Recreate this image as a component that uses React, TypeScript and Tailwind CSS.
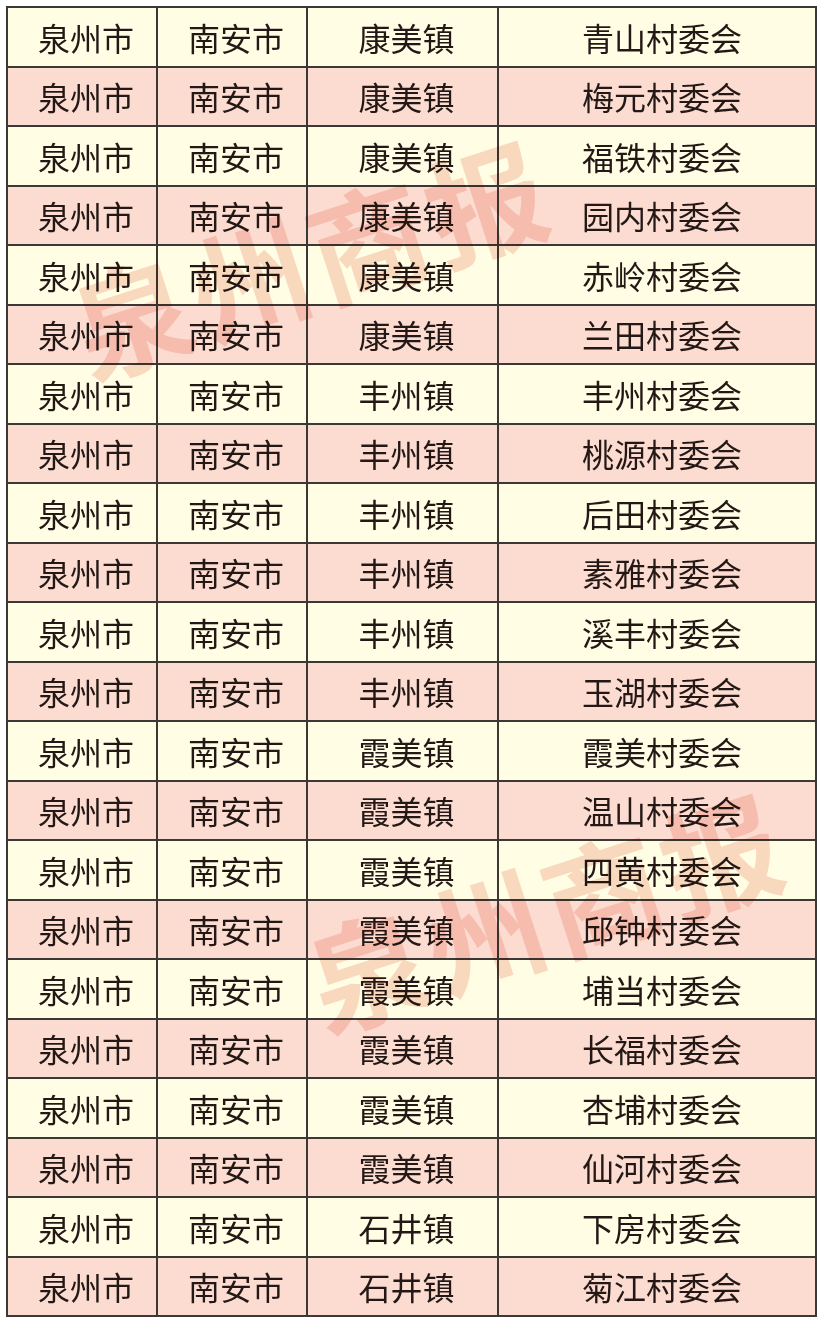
import React from "react";

const rows: [string, string][] = [
  ["康美镇", "青山村委会"],
  ["康美镇", "梅元村委会"],
  ["康美镇", "福铁村委会"],
  ["康美镇", "园内村委会"],
  ["康美镇", "赤岭村委会"],
  ["康美镇", "兰田村委会"],
  ["丰州镇", "丰州村委会"],
  ["丰州镇", "桃源村委会"],
  ["丰州镇", "后田村委会"],
  ["丰州镇", "素雅村委会"],
  ["丰州镇", "溪丰村委会"],
  ["丰州镇", "玉湖村委会"],
  ["霞美镇", "霞美村委会"],
  ["霞美镇", "温山村委会"],
  ["霞美镇", "四黄村委会"],
  ["霞美镇", "邱钟村委会"],
  ["霞美镇", "埔当村委会"],
  ["霞美镇", "长福村委会"],
  ["霞美镇", "杏埔村委会"],
  ["霞美镇", "仙河村委会"],
  ["石井镇", "下房村委会"],
  ["石井镇", "菊江村委会"],
];

function Watermark({ x, y, size }: { x: number; y: number; size: number }) {
  return (
    <div
      className="pointer-events-none absolute whitespace-nowrap font-semibold leading-none text-[#f9dbd5] mix-blend-multiply"
      style={{
        left: x,
        top: y,
        fontSize: size,
        letterSpacing: "6px",
        transform: "translate(-50%, -50%) rotate(-18deg)",
      }}
    >
      泉州商报
    </div>
  );
}

export default function App() {
  return (
    <div
      className="relative min-h-[1324px] w-[825px] overflow-hidden bg-white pt-[6px] pl-[6px]"
      style={{ fontFamily: '"Noto Sans CJK SC", "Noto Sans", sans-serif' }}
    >
      <div className="w-[811px] border-2 border-[#3b3836] text-[32px] leading-none text-[#231815]">
        {rows.map(([town, village], i) => (
          <div
            key={i}
            className={
              "flex h-[57.5px] box-content " +
              (i > 0 ? "border-t-2 border-[#3b3836] " : "") +
              (i % 2 === 0 ? "bg-[#fffde4]" : "bg-[#fcdcd1]")
            }
          >
            <div className="flex w-[148px] items-center justify-center pl-[8px]">泉州市</div>
            <div className="flex w-[150px] items-center justify-center border-l-2 border-[#3b3836] pl-[8px]">南安市</div>
            <div className="flex w-[191px] items-center justify-center border-l-2 border-[#3b3836] pl-[8px]">{town}</div>
            <div className="flex flex-1 items-center justify-center border-l-2 border-[#3b3836] pl-[10px]">{village}</div>
          </div>
        ))}
      </div>
      <Watermark x={310} y={255} size={118} />
      <Watermark x={545} y={908} size={118} />
    </div>
  );
}
